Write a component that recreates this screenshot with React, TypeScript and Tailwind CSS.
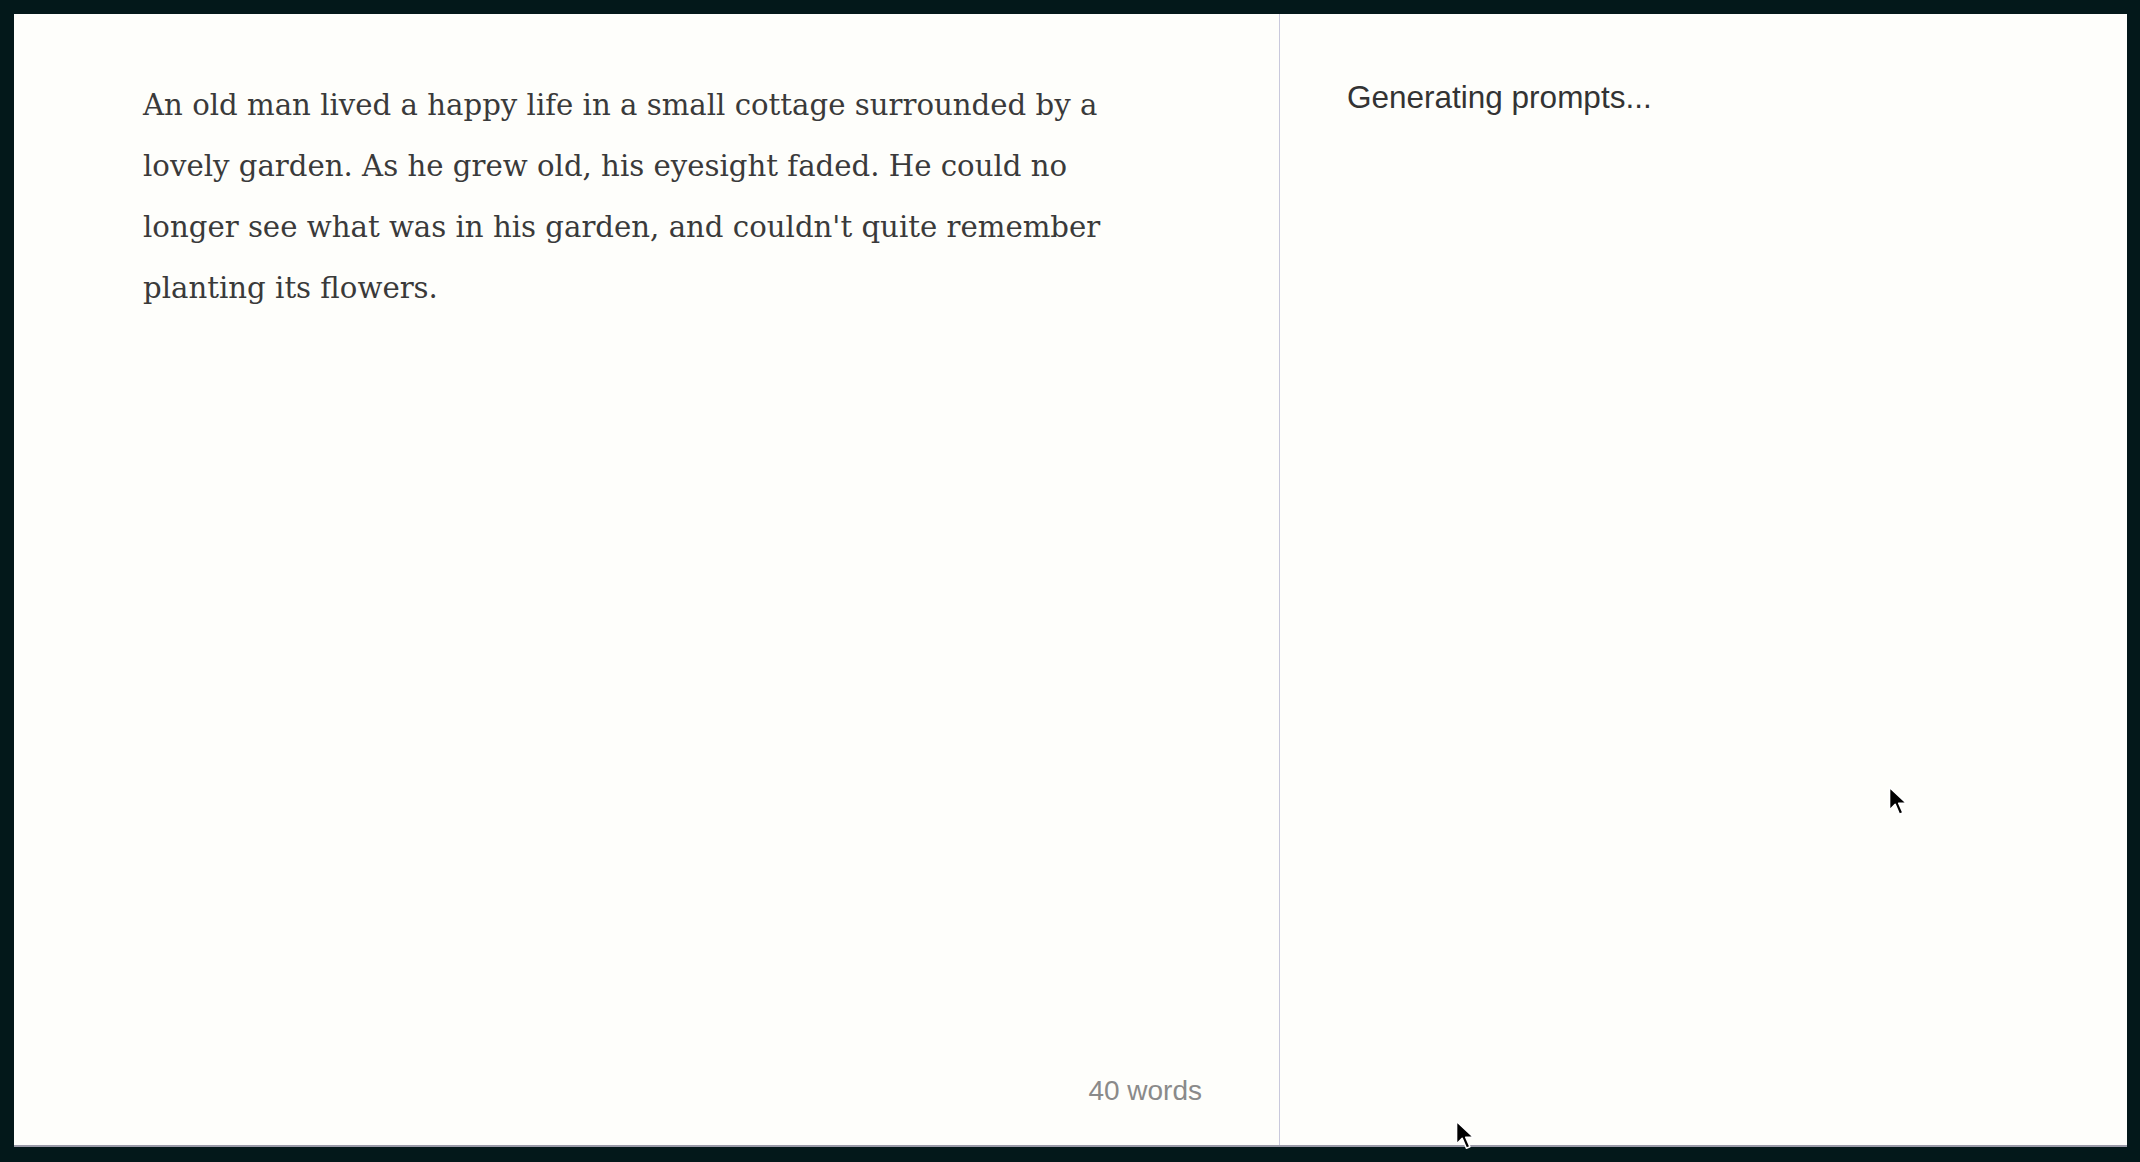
import React from "react";

const story =
    "An old man lived a happy life in a small cottage surrounded by a lovely garden. As he grew old, his eyesight faded. He could no longer see what was in his garden, and couldn't quite remember planting its flowers.";

function Pointer({ className }: { className?: string }) {
    return (
        <svg className={className} viewBox="0 0 14 22" width="20" height="31">
            <path
                d="M1 1 L1 17 L5 13 L8 20 L10.5 19 L7.5 12.2 L13 12.2 Z"
                fill="#000"
                stroke="#fff"
                strokeWidth="1.1"
                strokeLinejoin="round"
            />
        </svg>
    );
}

function Editor() {
    return (
        <div className="flex flex-col w-[1266px] h-full border-r border-[#c9c9dc]">
            <p
                className="pl-[129px] pr-[147px] pt-[61px] text-[29.2px] leading-[61px] text-[#3a3a3a]"
                style={{ fontFamily: '"DejaVu Serif", "Liberation Serif", serif' }}
            >
                {story}
            </p>
            <div
                className="mt-auto self-end pr-[77px] pb-[33px] text-[28px] text-[#8a8a8a]"
                style={{ fontFamily: '"Liberation Sans", Arial, sans-serif' }}
            >
                40 words
            </div>
        </div>
    );
}

function Prompts() {
    return (
        <div className="flex-1 h-full pl-[67px] pt-[60px]">
            <div
                className="text-[31.5px] text-[#333]"
                style={{ fontFamily: '"Liberation Sans", Arial, sans-serif' }}
            >
                Generating prompts...
            </div>
        </div>
    );
}

export default function App() {
    return (
        <div className="relative w-full h-screen bg-[#03181a] pt-[14px] pl-[14px] pr-[13px] pb-[15px]">
            <div className="flex w-full h-full bg-[#fefefb] border-b-2 border-[#9a9aa8]">
                <Editor />
                <Prompts />
            </div>
            <Pointer className="absolute left-[1888px] top-[786px]" />
            <Pointer className="absolute left-[1455px] top-[1120px]" />
        </div>
    );
}
